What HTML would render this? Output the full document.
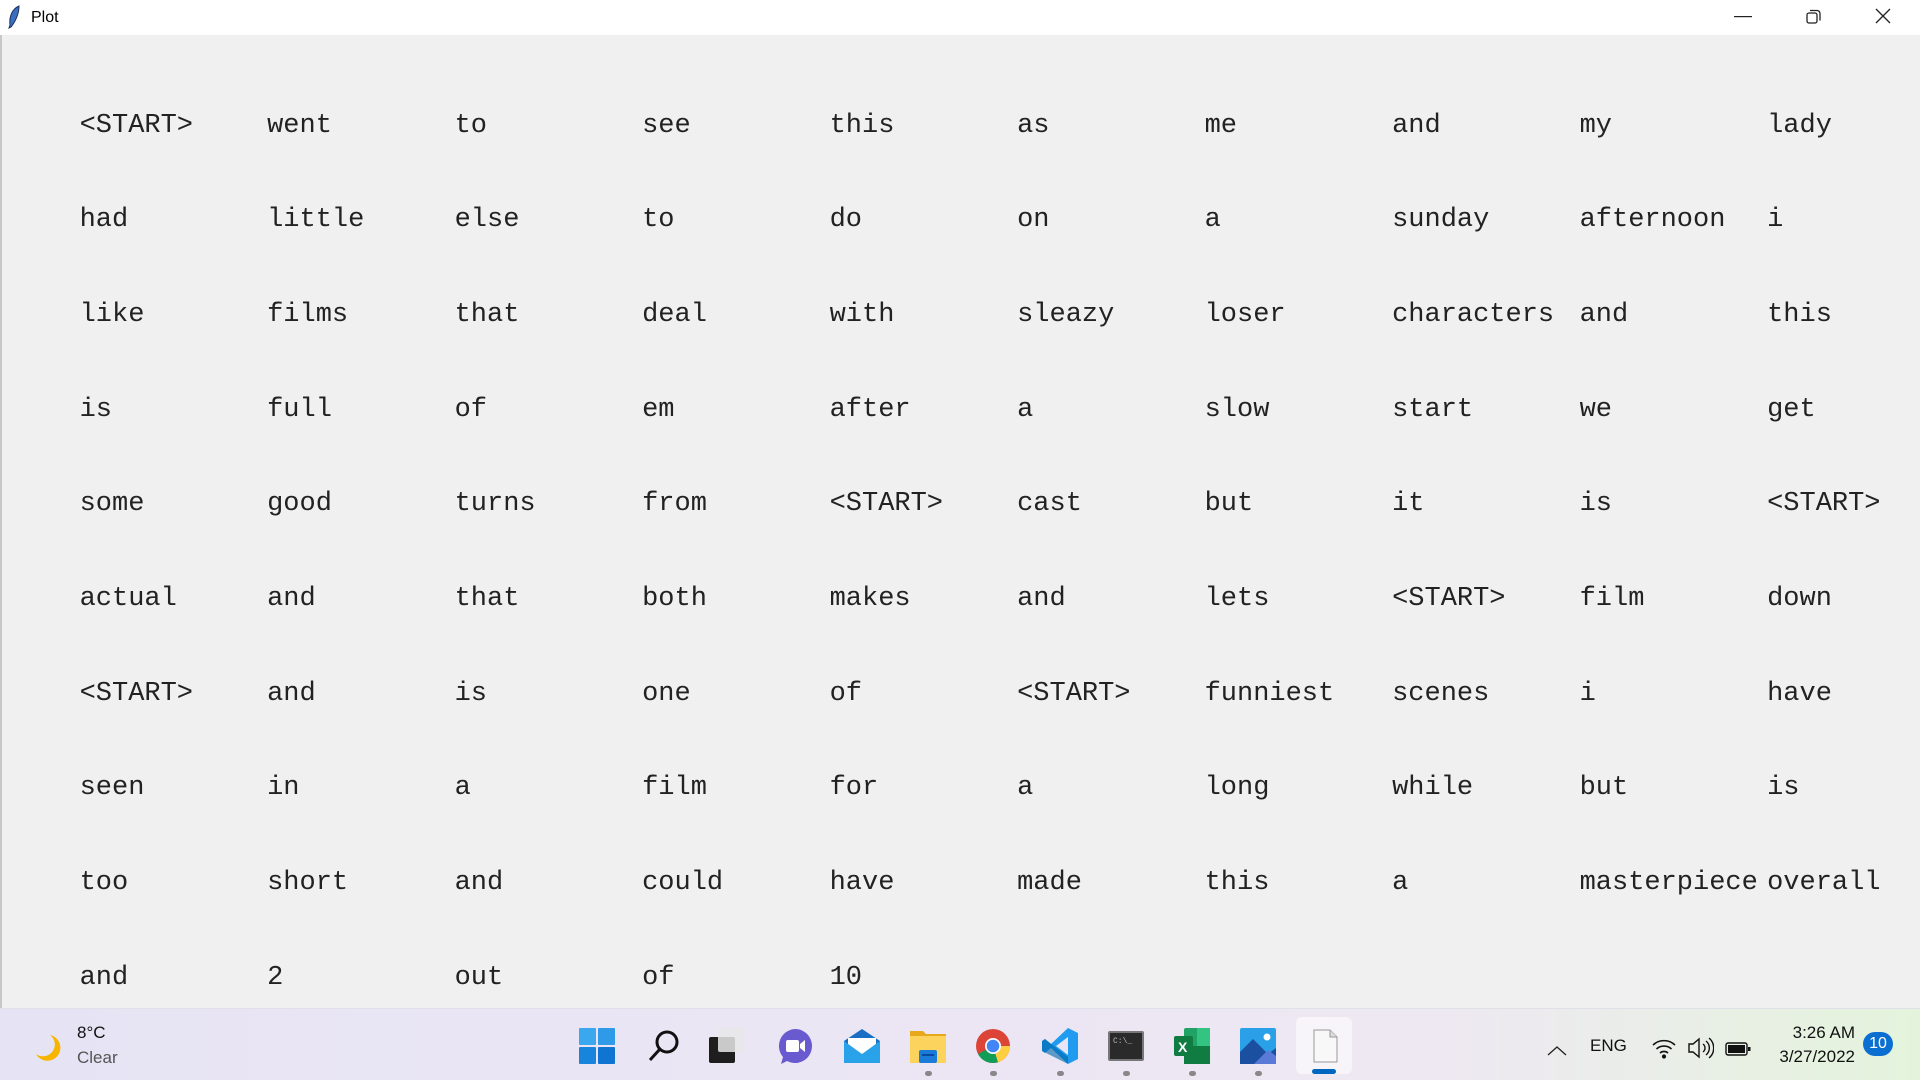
<!DOCTYPE html>
<html><head><meta charset="utf-8"><style>
*{margin:0;padding:0;box-sizing:border-box}
body{width:1920px;height:1080px;overflow:hidden;background:#f0f0f0;position:relative;font-family:"Liberation Sans",sans-serif}
#title{position:absolute;left:0;top:0;width:1920px;height:35px;background:#fff}
#title .t{position:absolute;left:31px;top:9px;font-size:16px;color:#000}
#main{position:absolute;left:0;top:35px;width:1920px;height:973px;background:#f0f0f0;border-left:2px solid #c8c8c8}
.w{position:absolute;font-family:"Liberation Mono",monospace;font-size:27px;line-height:27px;color:#222;white-space:pre}
#tb{position:absolute;left:0;top:1008px;width:1920px;height:72px;background:linear-gradient(90deg,#e6e4f4 0%,#ece6f4 50%,#eee8f2 75%,#e4f4dc 100%);border-top:1px solid #e0e0e8}
.ic{position:absolute;top:19px;width:36px;height:36px}
.dot{position:absolute;top:62px;width:7px;height:5px;border-radius:3px;background:#888}
.st{position:absolute;font-size:16px;color:#111}
</style></head><body>
<div id="title">
<svg style="position:absolute;left:6px;top:5px" width="16" height="24" viewBox="0 0 16 24"><path d="M13 1 C6 4 3 12 4 20 L3 23 L5 22 C10 16 13 8 13 1Z" fill="#3a6fc0" stroke="#1a2f60" stroke-width="1"/></svg>
<div class="t">Plot</div>
<svg style="position:absolute;left:1734px;top:16px" width="18" height="2"><rect width="18" height="1.2" fill="#222"/></svg>
<svg style="position:absolute;left:1806px;top:9px" width="15" height="15" viewBox="0 0 15 15" fill="none" stroke="#222" stroke-width="1.3"><rect x="1" y="4" width="10" height="10" rx="2"/><path d="M4 1.5h7a3 3 0 0 1 3 3v7"/></svg>
<svg style="position:absolute;left:1875px;top:8px" width="16" height="16" stroke="#222" stroke-width="1.3"><path d="M1 1L15 15M15 1L1 15"/></svg>
</div>
<div id="main"></div>
<div id="words"></div>
<script>
var rows=[["<START>","went","to","see","this","as","me","and","my","lady"],
["had","little","else","to","do","on","a","sunday","afternoon","i"],
["like","films","that","deal","with","sleazy","loser","characters","and","this"],
["is","full","of","em","after","a","slow","start","we","get"],
["some","good","turns","from","<START>","cast","but","it","is","<START>"],
["actual","and","that","both","makes","and","lets","<START>","film","down"],
["<START>","and","is","one","of","<START>","funniest","scenes","i","have"],
["seen","in","a","film","for","a","long","while","but","is"],
["too","short","and","could","have","made","this","a","masterpiece","overall"],
["and","2","out","of","10"]];
var h="";
rows.forEach(function(r,i){r.forEach(function(w,j){
h+='<div class="w" style="left:'+(79.6+187.5*j).toFixed(1)+'px;top:'+(112.5+94.7*i).toFixed(1)+'px">'+w.replace(/</g,"&lt;").replace(/>/g,"&gt;")+'</div>';});});
document.getElementById("words").innerHTML=h;
</script>
<div id="tb">
<svg style="position:absolute;left:32px;top:23px" width="32" height="32" viewBox="0 0 32 32"><path d="M18 3 A13 13 0 1 1 4 22 A11 11 0 0 0 18 3Z" fill="#f7b500"/></svg>
<div class="st" style="left:77px;top:14px;font-size:17px">8°C</div>
<div class="st" style="left:77px;top:39px;font-size:17px;color:#555">Clear</div>
<svg class="ic" style="left:579px" viewBox="0 0 36 36"><rect x="0" y="0" width="17" height="17" rx="1" fill="#3aa7ef"/><rect x="19" y="0" width="17" height="17" rx="1" fill="#2e9ae8"/><rect x="0" y="19" width="17" height="17" rx="1" fill="#1984dc"/><rect x="19" y="19" width="17" height="17" rx="1" fill="#0f74d2"/></svg>
<svg class="ic" style="left:646px" viewBox="0 0 36 36" fill="none" stroke="#111" stroke-width="3"><circle cx="21" cy="14" r="10"/><path d="M14 21L4 32"/></svg>
<svg class="ic" style="left:709px" viewBox="0 0 36 36"><rect x="0" y="9" width="26" height="26" rx="2" fill="#1e1e1e"/><rect x="9" y="0" width="26" height="24" rx="2" fill="#e8e8e8" opacity=".85"/></svg>
<svg class="ic" style="left:777px" viewBox="0 0 36 36"><path d="M18 1A17 17 0 1 1 10 33L4 36 6 29A17 17 0 0 1 18 1Z" fill="#6a5ad0"/><rect x="9" y="12" width="13" height="12" rx="2" fill="#fff"/><path d="M23 16L28 12V24L23 20Z" fill="#fff"/></svg>
<svg class="ic" style="left:844px" viewBox="0 0 36 36"><path d="M0 13L18 1 36 13V35H0Z" fill="#1a6fc4"/><path d="M4 10H32V22L18 30 4 22Z" fill="#fff"/><path d="M0 13L18 26 36 13V35H0Z" fill="#2aa2ea"/></svg>
<svg class="ic" style="left:910px" viewBox="0 0 36 36"><path d="M0 3H13L16 6H36V35H0Z" fill="#e8a81c"/><rect x="0" y="8" width="36" height="27" fill="#fcd35c"/><rect x="9" y="22" width="18" height="13" rx="2" fill="#1a7bd8"/><rect x="12" y="26" width="12" height="2" fill="#0a4aa0"/></svg>
<svg class="ic" style="left:975px" viewBox="0 0 36 36"><circle cx="18" cy="18" r="17" fill="#db4437"/><path d="M18 18L3 26A17 17 0 0 0 23 34.3Z" fill="#0f9d58"/><path d="M18 18L23 34.3A17 17 0 0 0 35 18 Z" fill="#ffcd40"/><circle cx="18" cy="18" r="8" fill="#fff"/><circle cx="18" cy="18" r="6.3" fill="#4285f4"/></svg>
<svg class="ic" style="left:1042px" viewBox="0 0 36 36"><path d="M26 0L36 5V31L26 36 9 20 3 25 0 23V13L3 11 9 16Z" fill="#1f9cf0"/><path d="M26 9L14 18 26 27Z" fill="#e9e5f5"/><path d="M0 13L3 11 26 29V36L0 23Z" fill="#0065a9" opacity=".6"/></svg>
<svg class="ic" style="left:1108px" viewBox="0 0 36 36"><rect x="0" y="3" width="36" height="30" rx="2" fill="#777"/><rect x="2" y="5" width="32" height="26" fill="#2a2a2a"/><text x="5" y="15" font-size="8" fill="#bbb" font-family="Liberation Mono">C:\_</text></svg>
<svg class="ic" style="left:1174px" viewBox="0 0 36 36"><rect x="10" y="0" width="26" height="36" rx="2" fill="#21a366"/><rect x="10" y="18" width="26" height="18" fill="#107c41"/><rect x="23" y="0" width="13" height="18" fill="#33c481"/><rect x="0" y="8" width="19" height="20" rx="2" fill="#107c41"/><text x="4" y="24" font-size="14" font-weight="bold" fill="#fff" font-family="Liberation Sans">X</text></svg>
<svg class="ic" style="left:1240px" viewBox="0 0 36 36"><rect x="0" y="0" width="36" height="36" rx="2" fill="#2aa0e8"/><circle cx="27" cy="9" r="3.5" fill="#fff"/><path d="M0 24L13 11 28 26 36 20V36H0Z" fill="#1b4fa0"/><path d="M14 36L28 22 36 28V36Z" fill="#5a7ad8"/></svg>
<div style="position:absolute;left:1296px;top:8px;width:56px;height:57px;border-radius:6px;background:rgba(255,255,255,.55)"></div>
<svg class="ic" style="left:1306px" viewBox="0 0 36 36"><path d="M8 2H24L31 9V34H8Z" fill="#f8f8f8" stroke="#999"/><path d="M24 2V9H31" fill="#ddd" stroke="#999"/></svg>
<div style="position:absolute;left:1312px;top:60px;width:24px;height:5px;border-radius:3px;background:#0067c0"></div>
<div class="dot" style="left:925px"></div><div class="dot" style="left:990px"></div><div class="dot" style="left:1057px"></div><div class="dot" style="left:1123px"></div><div class="dot" style="left:1189px"></div><div class="dot" style="left:1255px"></div>
<svg style="position:absolute;left:1547px;top:36px" width="20" height="12" fill="none" stroke="#222" stroke-width="1.3"><path d="M1 10L10 2 19 10"/></svg>
<div class="st" style="left:1590px;top:27px;font-size:17px">ENG</div>
<svg style="position:absolute;left:1652px;top:30px" width="24" height="20" viewBox="0 0 24 20" fill="none" stroke="#111" stroke-width="1.6"><path d="M1 6A16 16 0 0 1 23 6"/><path d="M4.5 10A11 11 0 0 1 19.5 10"/><path d="M8 14A6 6 0 0 1 16 14"/><circle cx="12" cy="17.5" r="1.3" fill="#111"/></svg>
<svg style="position:absolute;left:1688px;top:28px" width="26" height="22" viewBox="0 0 26 22" fill="none" stroke="#111" stroke-width="1.4"><path d="M1 7H5L11 2V20L5 15H1Z"/><path d="M15 7A5 5 0 0 1 15 15"/><path d="M18 4A9 9 0 0 1 18 18"/><path d="M21 1A13 13 0 0 1 21 21"/></svg>
<svg style="position:absolute;left:1725px;top:33px" width="26" height="14" viewBox="0 0 26 14"><rect x="1" y="1" width="21" height="12" rx="2" fill="none" stroke="#111" stroke-width="1.4"/><rect x="3" y="3" width="17" height="8" fill="#111"/><rect x="23" y="5" width="2.5" height="4" fill="#111"/></svg>
<div class="st" style="left:1760px;top:14px;width:95px;text-align:right;font-size:17px">3:26 AM</div>
<div class="st" style="left:1760px;top:38px;width:95px;text-align:right;font-size:17px">3/27/2022</div>
<div style="position:absolute;left:1863px;top:23px;width:30px;height:24px;border-radius:12px;background:#0a6fd0;color:#fff;font-size:16px;text-align:center;line-height:24px">10</div>
</div>
</body></html>
